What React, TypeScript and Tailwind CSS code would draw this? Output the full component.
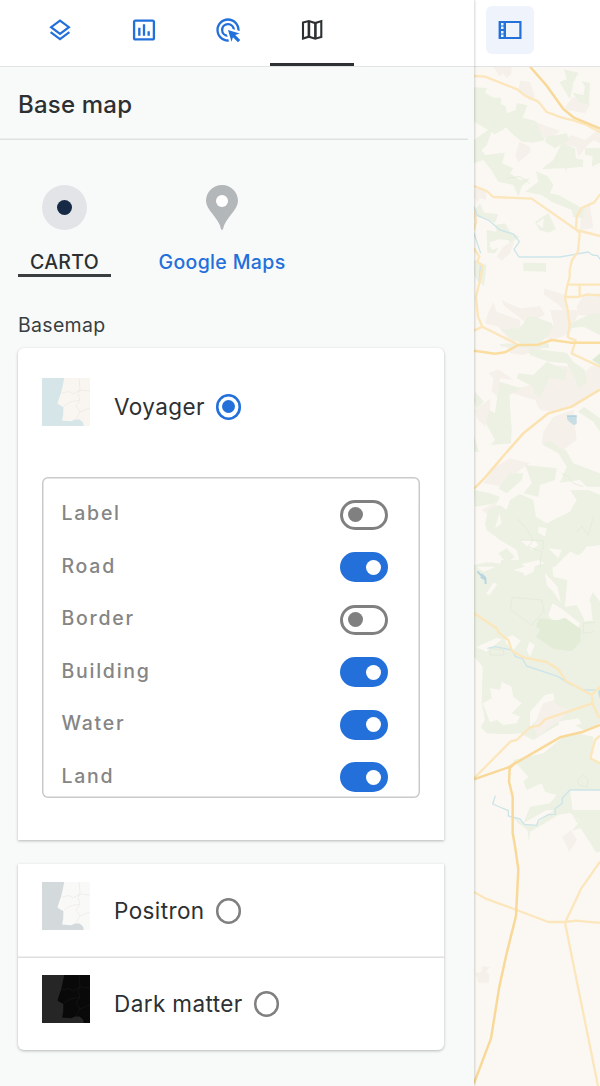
import { useState } from "react";
import { MdAdsClick, MdInsertChartOutlined } from "react-icons/md";

const LAYERS = [
  { name: "Label", on: false },
  { name: "Road", on: true },
  { name: "Border", on: false },
  { name: "Building", on: true },
  { name: "Water", on: true },
  { name: "Land", on: true },
];

function LayersIcon() {
  return (
    <svg width="24" height="24" viewBox="0 0 24 24" fill="none" stroke="#2370da" strokeWidth="2.2" className="block">
      <path d="M12 2.6 L20.9 9.2 L12 15.8 L3.1 9.2 Z" />
      <path d="M2.6 14.2 L12 21.1 L21.4 14.2" />
    </svg>
  );
}

function MapIcon() {
  return (
    <svg width="24" height="24" viewBox="0 0 24 24" fill="none" stroke="#2c3032" strokeWidth="2.1" className="block">
      <path d="M3 4.6 L8.9 3.1 L15.2 5.1 L21.3 3.1 V19 L15.2 20.7 L8.9 18.7 L3 20.6 Z" />
      <path strokeWidth="2.6" d="M8.9 3 V19 M15.4 5 V21" />
    </svg>
  );
}

function PanelIcon() {
  return (
    <svg width="24" height="20" viewBox="0 0 24 20" className="block">
      <path fill="#2370da" fillRule="evenodd" d="M.6 1 H23.5 V19 H.6 Z M8 3 V17 H21.3 V3 Z M3 3 V5.5 H5.5 V3 Z M3 6.5 V9 H5.5 V6.5 Z M3 11 V13.5 H5.5 V11 Z M3 14.5 V17 H5.5 V14.5 Z" />
    </svg>
  );
}

type ThumbProps = { sea: string; land: string; line: string };

function Thumb({ sea, land, line }: ThumbProps) {
  return (
    <svg width="48" height="48" viewBox="0 0 48 48" className="block shrink-0">
      <rect width="48" height="48" fill={sea} />
      <path fill={land} d="M22.3 0 H48 V48 H41.8 L41 44.5 L37.5 41.5 L33 41.5 L29 43.3 L20 42.6 L21.2 37 L21.4 29 L18 27.2 L15.4 25.4 L17 20.5 L19 15 L20.6 8 Z" />
      <path fill="none" stroke={line} strokeWidth=".7" d="M20 15 L27 13.5 L31 16 L38 12 L48 13 M37 0 L38 11 L36 16 L38 22 L34 28 L38 34 L34 41 M22 28 L28 24 L38 22 M38 34 L48 30" />
    </svg>
  );
}

function Radio({ checked }: { checked: boolean }) {
  return (
    <span
      className={
        checked
          ? "flex size-[25.5px] shrink-0 items-center justify-center rounded-full shadow-[inset_0_0_0_2.6px_#2370da]"
          : "flex size-[25.5px] shrink-0 items-center justify-center rounded-full shadow-[inset_0_0_0_2.5px_#808080]"
      }
    >
      {checked && <span className="size-[13px] rounded-full bg-[#2370da]" />}
    </span>
  );
}

function Toggle({ on, label, onChange }: { on: boolean; label: string; onChange: () => void }) {
  return (
    <button
      role="switch"
      aria-checked={on}
      aria-label={label}
      onClick={onChange}
      className={
        on
          ? "flex h-[30px] w-[48px] items-center justify-end rounded-full bg-[#2370da] pr-[7px]"
          : "flex h-[30px] w-[48px] items-center justify-start rounded-full border-[3px] border-[#808080] bg-white pl-[4.5px]"
      }
    >
      <span className={on ? "size-[15px] rounded-full bg-white" : "size-[15px] rounded-full bg-[#808080]"} />
    </button>
  );
}

function MapCanvas() {
  return (
    <svg width="126" height="1019" viewBox="12 21 378 3057" preserveAspectRatio="none" className="block bg-[#fbf8f3]" strokeLinejoin="round">
      <g fill="#f6f0ea">
        <path d="M70 20 H125 V40 L110 55 L98 38 L90 50 Z M150 62 L180 65 L195 110 L180 122 L145 90 Z M310 110 L360 135 L345 160 L290 150 L285 140 Z M195 185 L270 213 L245 232 L225 235 Z M305 225 L345 240 L390 205 V250 L370 240 L345 265 L325 292 L318 262 L270 250 Z M148 245 L180 260 L182 275 L145 308 L136 285 Z M15 385 L50 390 L48 420 L30 415 L22 428 L12 410 Z M335 440 L360 435 L370 505 L330 510 Z M100 560 L135 540 L120 580 L95 602 L80 590 Z M95 720 L150 745 L210 738 L225 765 L170 790 L100 735 Z M222 685 L285 705 L290 760 L260 730 L222 705 Z M340 705 L390 700 V770 L325 765 L320 740 Z M50 770 L70 725 L80 755 L150 780 L155 820 L130 850 L110 830 L85 800 L45 790 Z" />
        <path transform="translate(0 750)" d="M240 0 H330 L300 70 L250 90 L200 80 L190 100 L235 110 L160 135 L120 130 L105 100 L150 100 L230 80 L250 40 Z M55 190 L85 178 L132 210 L90 205 L82 260 L65 245 L70 205 Z M125 240 L180 225 L220 230 L255 190 L240 165 L310 170 L330 200 L365 168 L390 170 V235 L320 280 L250 305 L210 300 L195 270 L125 250 Z M15 300 L62 265 L58 320 L45 350 L20 325 Z M220 365 L250 320 L310 300 L320 390 L280 420 L215 400 Z M40 520 L75 470 L120 445 L180 460 L150 480 L100 530 Z M35 600 L70 580 L90 590 L60 620 Z M335 580 L370 560 L390 550 L350 600 Z" />
        <path transform="translate(0 1500)" d="M365 420 H390 V455 L370 435 Z" />
        <path transform="translate(0 2250)" d="M276 80 L303 60 L321 90 L298 127 Z M35 468 L60 471 L48 485 L57 493 V518 H25 L15 488 L35 486 Z" />
      </g>
      <g fill="#ecf1e3">
        <path d="M12 82 L52 84 L45 98 L70 113 L93 113 V132 L108 140 L110 160 L137 150 L140 129 L172 136 L158 173 L197 183 L225 240 L190 248 L155 245 L105 203 L85 235 L65 215 L50 255 L35 270 L45 285 L105 278 L96 310 L130 325 L120 340 L150 360 L180 355 L155 380 L145 410 L130 375 L85 365 L60 325 L40 300 L12 310 V240 L40 220 L55 210 L12 185 Z" />
        <path d="M282 28 L326 38 L310 68 L300 118 L268 66 L290 58 Z M335 62 L360 70 L357 135 L325 125 L308 98 L340 105 L345 80 Z M230 230 L290 220 L298 240 L255 265 L225 245 Z M276 248 L315 265 L318 295 L340 300 L338 320 L290 325 V340 L285 325 L215 327 L250 300 Z M345 265 L390 263 V308 L365 320 L368 288 L345 285 Z M198 333 L235 350 L250 375 L240 400 L265 405 L310 430 L345 450 L340 475 L310 470 L305 450 L245 425 L215 405 L165 395 L205 365 Z M195 485 L235 460 L258 508 L235 518 L208 510 Z M50 510 L80 515 L75 495 L105 490 L120 515 L148 530 L120 550 L115 540 L85 538 L60 550 L58 560 L85 565 L75 580 L52 578 Z M15 450 L30 430 L42 458 L85 462 L75 490 L50 475 L12 470 Z M160 608 L228 610 V635 L160 633 Z M12 600 L50 615 L42 678 L25 665 L12 645 Z M175 770 L205 780 L245 790 L248 800 L220 840 L155 852 L95 810 L150 805 Z" />
        <path transform="translate(0 750)" d="M175 20 L195 20 L245 40 L240 70 L200 110 L160 100 L130 90 L95 60 L150 55 Z M305 38 L370 8 L390 12 V75 L340 50 L300 55 Z M88 102 L235 100 L238 114 L95 110 Z M175 115 L220 120 L290 128 L310 155 L345 180 L350 220 L325 235 L315 205 L290 160 L235 155 L180 135 Z M230 155 L290 180 L285 210 L240 205 L225 230 L210 262 L192 250 L190 230 L140 205 L145 190 L190 195 Z M88 215 L155 235 L118 255 L125 360 L123 400 L62 405 L75 390 L48 340 L58 300 L75 310 Z M15 245 L42 275 L20 295 L12 275 Z M12 378 L27 425 L12 425 Z M324 305 L342 290 L390 325 V365 L370 335 Z M215 402 L240 392 L270 415 L288 420 L310 460 L390 490 V530 L350 530 L330 510 L270 518 L290 470 L265 430 Z M165 465 L260 475 L255 510 L210 525 L205 560 L160 550 L185 520 L175 490 Z M120 490 L160 490 L155 510 L110 550 L85 535 Z M12 540 L60 550 L90 560 L80 580 L15 590 Z M120 570 L150 552 L190 570 L198 620 L230 640 L300 605 L320 570 L300 540 L355 540 L390 555 V705 L350 710 L330 738 L300 725 L280 745 L255 770 H12 V765 L50 757 L90 762 L80 775 L150 760 L140 720 L90 690 L50 660 L45 640 L55 600 L90 585 L110 600 Z M85 730 L110 715 L134 740 L110 760 Z" />
        <path fill="#dfebd4" d="M366 900 L390 880 V916 Z" />
        <path transform="translate(0 1500)" d="M12 15 L40 35 L75 22 L60 5 L90 12 L95 0 H245 L250 50 L292 60 L285 140 L320 135 L345 180 L368 182 L362 130 L358 120 L368 97 L390 125 V490 L320 520 L370 530 L365 600 L390 610 V690 L300 690 L310 770 L380 880 V810 L345 795 L330 785 L300 755 L230 750 L160 790 L180 740 L240 730 L260 705 L225 695 L215 670 L170 690 L160 665 L175 650 L130 600 L220 580 L280 530 L340 510 L290 480 L190 540 L150 520 L110 523 L50 520 L32 500 L45 480 L35 430 L38 320 L12 290 Z" />
        <path transform="translate(0 2250)" d="M130 20 L160 40 L195 45 L230 15 L255 0 H390 V125 L378 128 L375 85 L345 50 L305 63 L331 33 L300 8 L265 15 L215 45 L180 65 L177 95 L172 60 L145 40 Z" />
      </g>
      <g fill="#fbf8f3">
        <path d="M200 490 L222 475 L218 505 Z M70 225 L110 203 L125 220 L85 235 Z M60 545 L115 540 L98 560 L65 570 Z" />
        <path transform="translate(0 750)" d="M88 610 L95 640 L75 655 Z M205 650 L230 655 L225 680 L205 668 Z M235 715 L275 720 L265 745 Z M150 690 L185 720 L205 705 L195 690 Z M320 740 L345 720 L350 760 Z" />
        <path transform="translate(0 1500)" d="M48 102 L70 68 L82 72 L60 105 Z M225 40 L240 55 L262 80 L273 130 L250 95 L230 75 Z M235 165 L248 130 L280 150 L330 190 L325 203 L275 180 L245 180 Z M105 235 L128 225 L152 242 L130 270 L108 250 Z M170 270 L178 245 L194 255 L180 290 Z M18 262 L80 234 L95 238 L50 275 Z M60 385 L90 390 L95 365 L124 380 L130 410 L155 430 L125 460 L150 470 L140 490 L100 495 L80 480 L60 487 L38 430 L65 415 Z M180 455 L225 405 L250 400 L253 420 L220 430 L200 480 L180 500 Z M265 485 L325 475 L335 490 L275 510 Z M130 30 L165 20 L155 12 L205 0 L225 10 L195 18 L190 35 L165 48 L160 38 Z M335 160 L350 150 L360 180 L345 185 Z" />
      </g>
      <path transform="translate(0 1500)" fill="#f6f0ea" d="M220 430 L250 423 L270 440 L300 450 L265 485 L240 500 L205 530 L190 500 Z" />
      <g transform="translate(0 1500)">
        <path fill="#e3ecd7" d="M207 175 L262 181 L285 173 L333 208 L331 245 L305 273 L250 267 L198 230 L210 210 L198 197 Z" />
        <path fill="none" stroke="#e1e9d8" strokeWidth="2" d="M127 112 L215 120 L222 153 L184 195 L121 149 Z M340 190 L375 187 M340 190 V220 L372 215 M60 265 L100 270 L102 285 L60 285 Z M322 660 L340 645 L355 660 L350 680 L325 675 Z" />
      </g>
      <path fill="none" stroke="#e2ebd8" strokeWidth="2.5" d="M110 355 L150 350 L178 370 M140 1375 L165 1400 L190 1440 L175 1460 L215 1475 L210 1520 M150 1440 L220 1442 L218 1470 M275 1240 L295 1250 L310 1270 L340 1280 M315 1420 L335 1400 L355 1425 L370 1370" />
      <path fill="#c8dde4" d="M291 1065 H320 V1091 L312 1096 L298 1085 L291 1078 Z M384 1895 L390 1888 V1918 Z" />
      <path fill="none" stroke="#9fcbd9" strokeWidth="2" d="M291 1069 H320" />
      <path fill="none" stroke="#b9d6e0" strokeWidth="6" d="M22 1534 L34 1547 M34 1542 L46 1554 L47 1572 M32 1550 L47 1560" />
      <g fill="none" stroke="#cde5e9" strokeWidth="4">
        <path d="M12 440 L22 466 L58 482 L90 510 L130 522 L148 545 L132 568 L147 591 H270 L355 576 L367 585 L383 587 L390 598 M12 520 L32 580 M32 610 L27 668" />
        <path transform="translate(0 1500)" d="M52 265 L75 260 L125 270 L137 290 L157 296 L170 318 L265 350 L295 370 L340 390 H380 L390 380 M76 707 L68 732 L115 752 V768 L150 777 L163 793 L200 796 L205 780 L235 764 L256 763 L255 746 L277 730 V714 L300 690 H390" />
      </g>
      <g fill="none" stroke="#fce6bc" strokeWidth="7">
        <path d="M12 48 L45 50 L142 88 L165 107 L205 125 L230 156 L275 173 L310 181 L345 193 L390 216" />
        <path d="M12 378 L50 393 L70 411 L185 416 L320 510 L390 528 M390 403 L373 427 L335 444 L320 470 L318 508 L329 520 L324 575 L306 600 L299 630 V650 L291 680 L285 712 L292 745 L299 795 L293 830 L300 835 L317 841 L305 880 L390 920 M291 674 H390 M329 675 V710 M285 711 L325 711 L352 703 L390 706" />
        <path d="M12 450 L18 485 L12 510 M12 565 L28 590 L22 605 L38 620 L30 660 L18 710 L24 770 L37 800 L12 812 M37 800 L142 853" />
        <path transform="translate(0 1500)" d="M12 160 L80 205 L88 220 L115 240 L126 273 L160 292 L230 306 L265 328 L287 362 L365 405 L390 380 M367 410 V430 L225 478 L207 497 L180 502 L140 540 L122 544 L12 655 M367 430 L388 475 M390 527 L375 540 L361 595 L390 610" />
        <path transform="translate(0 2250)" d="M12 246 L45 265 L140 300 L235 336 H285 L318 332 L380 338 H390 M390 155 L334 235 L285 338 L384 828" />
      </g>
      <g fill="none" stroke="#f8d99a" strokeWidth="7.5">
        <path d="M180 20 L230 77 L280 147 L310 172 L390 206" />
        <path stroke="#fadd9f" d="M12 872 L75 881 L105 877 L145 855 L205 854 L245 840 L305 848 L390 848" />
        <path stroke="#fbe2b0" d="M12 1286 L45 1253 L105 1182 L160 1120 L235 1060 L305 1040 L390 989" />
        <path transform="translate(0 1500)" d="M390 495 L340 515 L270 532 L115 622 L12 658" />
        <path transform="translate(0 1500)" d="M137 606 L119 625 L117 665 L128 710 V818 L136 865 L145 928 L138 1068 L110 1180 L88 1280 L63 1435 L12 1570" />
      </g>
    </svg>
  );
}

function BasemapOption({ name, checked, onSelect, thumb }: { name: string; checked: boolean; onSelect: () => void; thumb: ThumbProps }) {
  return (
    <button onClick={onSelect} className="flex items-start text-left">
      <Thumb {...thumb} />
      <span className="ml-6 flex h-[58px] items-center gap-[11px] text-[22.5px] leading-[30px] tracking-[0.4px] text-[#2c3032]">
        {name}
        <Radio checked={checked} />
      </span>
    </button>
  );
}

export default function App() {
  const [layers, setLayers] = useState(LAYERS);
  const [basemap, setBasemap] = useState("Voyager");

  const toggleLayer = (name: string) =>
    setLayers((items) => items.map((item) => (item.name === name ? { ...item, on: !item.on } : item)));

  return (
    <div className="flex h-[1086px] w-[600px] overflow-hidden bg-white font-['Inter',sans-serif]">
      <aside className="relative z-10 flex w-[474px] shrink-0 flex-col bg-[#f8faf9] shadow-[0.5px_0_2px_rgba(44,48,50,0.2)]">
        <nav className="flex h-[67px] shrink-0 border-b border-[#e1e3e4] bg-white pl-[18px] text-[#2370da]">
          <button aria-label="Layers" className="flex h-[66px] w-[84px] items-center justify-center pb-[7px]">
            <LayersIcon />
          </button>
          <button aria-label="Widgets" className="flex h-[66px] w-[84px] items-center justify-center pb-1.5">
            <MdInsertChartOutlined size={28} />
          </button>
          <button aria-label="Interactions" className="flex h-[66px] w-[84px] items-center justify-center pb-1.5">
            <MdAdsClick size={28} />
          </button>
          <button aria-label="Base map" className="flex h-[66px] w-[84px] items-center justify-center border-b-[3px] border-[#2c3032] pb-[3px]">
            <MapIcon />
          </button>
        </nav>

        <header className="mr-1.5 flex h-[72.5px] shrink-0 items-center pl-[18px] pt-1 shadow-[inset_0_-1.5px_0_#dfe1e2]">
          <h1 className="text-[24px] font-medium leading-8 tracking-[0.2px] text-[#2c3032]">Base map</h1>
        </header>

        <main className="flex flex-col pl-[18px] pr-[30px] pt-[45.5px]">
          <div className="flex h-[91.5px] gap-[36px] text-[19.5px] font-medium leading-6 tracking-[0.35px]">
            <button className="flex w-[93px] flex-col items-center border-b-[3px] border-[#3a3e40] text-[#2c3032]">
              <span className="flex size-[45px] items-center justify-center rounded-full bg-[#e2e4e8]">
                <span className="size-[15px] rounded-full bg-[#162945]" />
              </span>
              <span className="mt-5">CARTO</span>
            </button>
            <button className="flex w-[150px] flex-col items-center text-[#2370da]">
              <svg width="32" height="45" viewBox="0 0 32 45" className="block">
                <path fill="#b3b7b9" d="M16 0 C7 0 0 7.1 0 16 C0 25 13 33 15 44 Q16 46 17 44 C19 33 32 25 32 16 C32 7.1 25 0 16 0 Z" />
                <circle cx="16" cy="16" r="6" fill="#fff" />
              </svg>
              <span className="mt-5 whitespace-nowrap">Google Maps</span>
            </button>
          </div>

          <h2 className="mt-[36px] text-[19.5px] leading-6 tracking-[0.3px] text-[#3a3e40]">Basemap</h2>

          <section className="mt-[11.5px] flex h-[492px] flex-col rounded-t-[6px] bg-white px-6 pt-[29.9px] shadow-[0_1px_3px_rgba(44,48,50,0.32)]">
            <BasemapOption
              name="Voyager"
              checked={basemap === "Voyager"}
              onSelect={() => setBasemap("Voyager")}
              thumb={{ sea: "#d5e5e8", land: "#f9f6f1", line: "#ede8e0" }}
            />
            <div className="mt-[41.5px] flex h-[321px] flex-col overflow-hidden rounded-[6px] pl-[19.5px] pr-[32px] pt-[10.9px] shadow-[inset_0_0_0_1.5px_#c9cacb]">
              {layers.map((layer) => (
                <div key={layer.name} className="flex h-[52.5px] shrink-0 items-center justify-between">
                  <span className="pb-[3px] text-[19.5px] font-medium leading-6 tracking-[1.75px] text-[#858585]">{layer.name}</span>
                  <Toggle on={layer.on} label={layer.name} onChange={() => toggleLayer(layer.name)} />
                </div>
              ))}
            </div>
          </section>

          <section className="mt-6 flex flex-col rounded-b-[6px] bg-white shadow-[0_1px_3px_rgba(44,48,50,0.32)]">
            <div className="flex h-[93.5px] pl-6 pt-[18px] shadow-[inset_0_-1.5px_0_#dddfe0]">
              <BasemapOption
                name="Positron"
                checked={basemap === "Positron"}
                onSelect={() => setBasemap("Positron")}
                thumb={{ sea: "#d4dadc", land: "#f9f9f8", line: "#eeeaea" }}
              />
            </div>
            <div className="flex h-[92.5px] pl-6 pt-[17.5px]">
              <BasemapOption
                name="Dark matter"
                checked={basemap === "Dark matter"}
                onSelect={() => setBasemap("Dark matter")}
                thumb={{ sea: "#262626", land: "#090909", line: "#171717" }}
              />
            </div>
          </section>
        </main>
      </aside>

      <div className="flex w-[126px] shrink-0 flex-col">
        <div className="flex h-[67px] shrink-0 border-b border-[#e1e3e4] bg-white pl-3 pt-1.5">
          <button aria-label="Toggle panel" className="flex size-12 items-center justify-center rounded-[6px] bg-[#eef3fc]">
            <PanelIcon />
          </button>
        </div>
        <MapCanvas />
      </div>
    </div>
  );
}
